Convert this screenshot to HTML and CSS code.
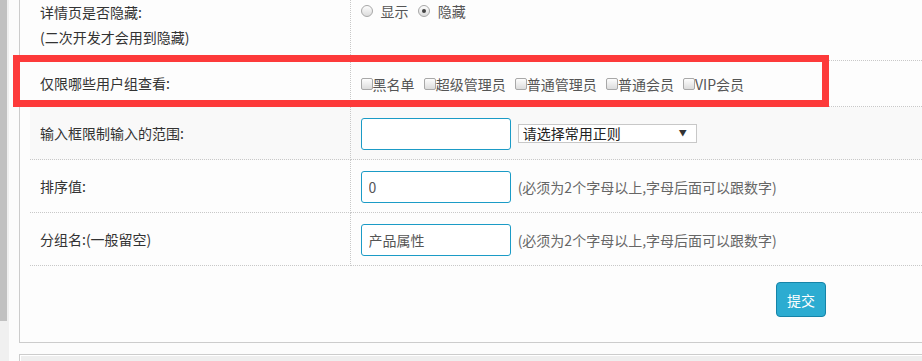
FILE: index.html
```html
<!DOCTYPE html>
<html lang="zh-CN">
<head>
    <meta charset="UTF-8">
    <meta name="viewport" content="width=device-width, initial-scale=1.0">
    <title>字段设置</title>
    <link rel="stylesheet" href="styles.css">
</head>
<body>
    <div class="scroll-track"><div class="scroll-thumb"></div></div>

    <div class="main">
        <div class="panel">
            <table class="form-table">
                <tr class="row-first">
                    <td class="label">详情页是否隐藏:<br>(二次开发才会用到隐藏)</td>
                    <td class="value top">
                        <label class="opt"><input type="radio" name="hide"> 显示</label>
                        <label class="opt"><input type="radio" name="hide" checked> 隐藏</label>
                    </td>
                </tr>
                <tr class="row-groups">
                    <td class="label">仅限哪些用户组查看:</td>
                    <td class="value">
                        <label class="chk"><input type="checkbox">黑名单</label>
                        <label class="chk"><input type="checkbox">超级管理员</label>
                        <label class="chk"><input type="checkbox">普通管理员</label>
                        <label class="chk"><input type="checkbox">普通会员</label>
                        <label class="chk"><input type="checkbox">VIP会员</label>
                    </td>
                </tr>
                <tr class="row-alt">
                    <td class="label">输入框限制输入的范围:</td>
                    <td class="value">
                        <input type="text" class="field" value="">
                        <span class="select-wrap">
                            <select class="pick">
                                <option>请选择常用正则</option>
                            </select>
                        </span>
                    </td>
                </tr>
                <tr>
                    <td class="label">排序值:</td>
                    <td class="value">
                        <input type="text" class="field" value="0">
                        <span class="hint">(必须为2个字母以上,字母后面可以跟数字)</span>
                    </td>
                </tr>
                <tr>
                    <td class="label">分组名:(一般留空)</td>
                    <td class="value">
                        <input type="text" class="field" value="产品属性">
                        <span class="hint">(必须为2个字母以上,字母后面可以跟数字)</span>
                    </td>
                </tr>
            </table>

            <div class="actions">
                <button class="submit-btn">提交</button>
            </div>
        </div>

        <div class="panel-next"><div class="panel-next-inner"></div></div>
    </div>

    <!-- annotation box around the user group row -->
    <div class="mark-box"></div>
</body>
</html>
```

FILE: styles.css
```css
* {
    margin: 0;
    padding: 0;
    box-sizing: border-box;
}

body {
    font-family: "Noto Sans CJK SC", "Liberation Sans", sans-serif;
    font-size: 14px;
    color: #333;
    background: #fcfcfc;
    display: flex;
    height: 100vh;
    overflow: hidden;
}

.scroll-track {
    width: 9px;
    flex-shrink: 0;
    background: #f0f0f0;
}

.scroll-thumb {
    width: 7px;
    height: 321px;
    background: #c1c1c1;
}

.main {
    flex: 1;
    min-width: 0;
    padding-left: 10px;
}

.panel {
    border: 1px solid #ccc;
    border-top: none;
    border-right: none;
    background: #fdfdfd;
    padding-left: 10px;
}

.form-table {
    width: 100%;
    border-collapse: collapse;
}

.form-table td {
    border-bottom: 1px dotted #c8c8c8;
    vertical-align: middle;
}

.form-table .label {
    width: 320px;
    padding-left: 10px;
    border-right: 1px dotted #c8c8c8;
    line-height: 25px;
}

.form-table .value {
    padding-left: 10px;
    color: #555;
}

.row-first td {
    height: 60px;
    vertical-align: top;
    padding-bottom: 10px;
}

.row-first .value {
    line-height: 22px;
}

.row-groups td {
    height: 46px;
}

.row-alt td {
    background: #f9f9f9;
}

.form-table tr:not(.row-first):not(.row-groups) td {
    height: 53px;
    padding-top: 1px;
}

.opt {
    display: inline-flex;
    align-items: center;
    gap: 4px;
    margin-right: 6px;
}

.chk {
    display: inline-flex;
    align-items: center;
    margin-right: 6px;
}

input[type="radio"],
input[type="checkbox"] {
    appearance: none;
    width: 12px;
    height: 12px;
    border: 1px solid #a8a8a8;
    background: linear-gradient(#fdfdfd, #dcdcdc);
    flex-shrink: 0;
}

input[type="radio"] {
    border-radius: 50%;
    margin-right: 4px;
    position: relative;
}

input[type="radio"]:checked::after {
    content: "";
    position: absolute;
    left: 3px;
    top: 3px;
    width: 4px;
    height: 4px;
    border-radius: 50%;
    background: #444;
}

input[type="checkbox"] {
    border-radius: 2px;
}

.field {
    width: 150px;
    height: 32px;
    border: 1px solid #1b9bc6;
    border-radius: 3px;
    padding: 0 7px;
    font-family: inherit;
    font-size: 14px;
    color: #555;
    background: #fff;
    vertical-align: middle;
}

.select-wrap {
    position: relative;
    display: inline-block;
    margin-left: 4px;
    vertical-align: middle;
}

.pick {
    appearance: none;
    width: 179px;
    height: 19px;
    border: 1px solid #c8c8c8;
    background: #fff;
    font-family: inherit;
    font-size: 14px;
    line-height: 17px;
    color: #222;
    padding: 0 4px;
    display: block;
}

.select-wrap::after {
    content: "▼";
    position: absolute;
    right: 10px;
    top: 3px;
    font-size: 8px;
    color: #333;
    pointer-events: none;
}

.hint {
    margin-left: 4px;
    color: #666;
    vertical-align: middle;
}

.actions {
    padding: 16px 0 25px 746px;
}

.submit-btn {
    width: 50px;
    height: 35px;
    background: #2cacd1;
    border: 1px solid #1684a8;
    border-radius: 4px;
    color: #fff;
    font-family: inherit;
    font-size: 14px;
}

.panel-next {
    margin-top: 11px;
    height: 8px;
    border: 1px solid #ccc;
    border-right: none;
    border-bottom: none;
    padding: 1px 0 0 1px;
    background: #fff;
}

.panel-next-inner {
    height: 100%;
    background: #eee;
}

.mark-box {
    position: absolute;
    left: 13px;
    top: 55px;
    width: 816px;
    height: 52px;
    border: 7px solid #fd3a3a;
}
```
